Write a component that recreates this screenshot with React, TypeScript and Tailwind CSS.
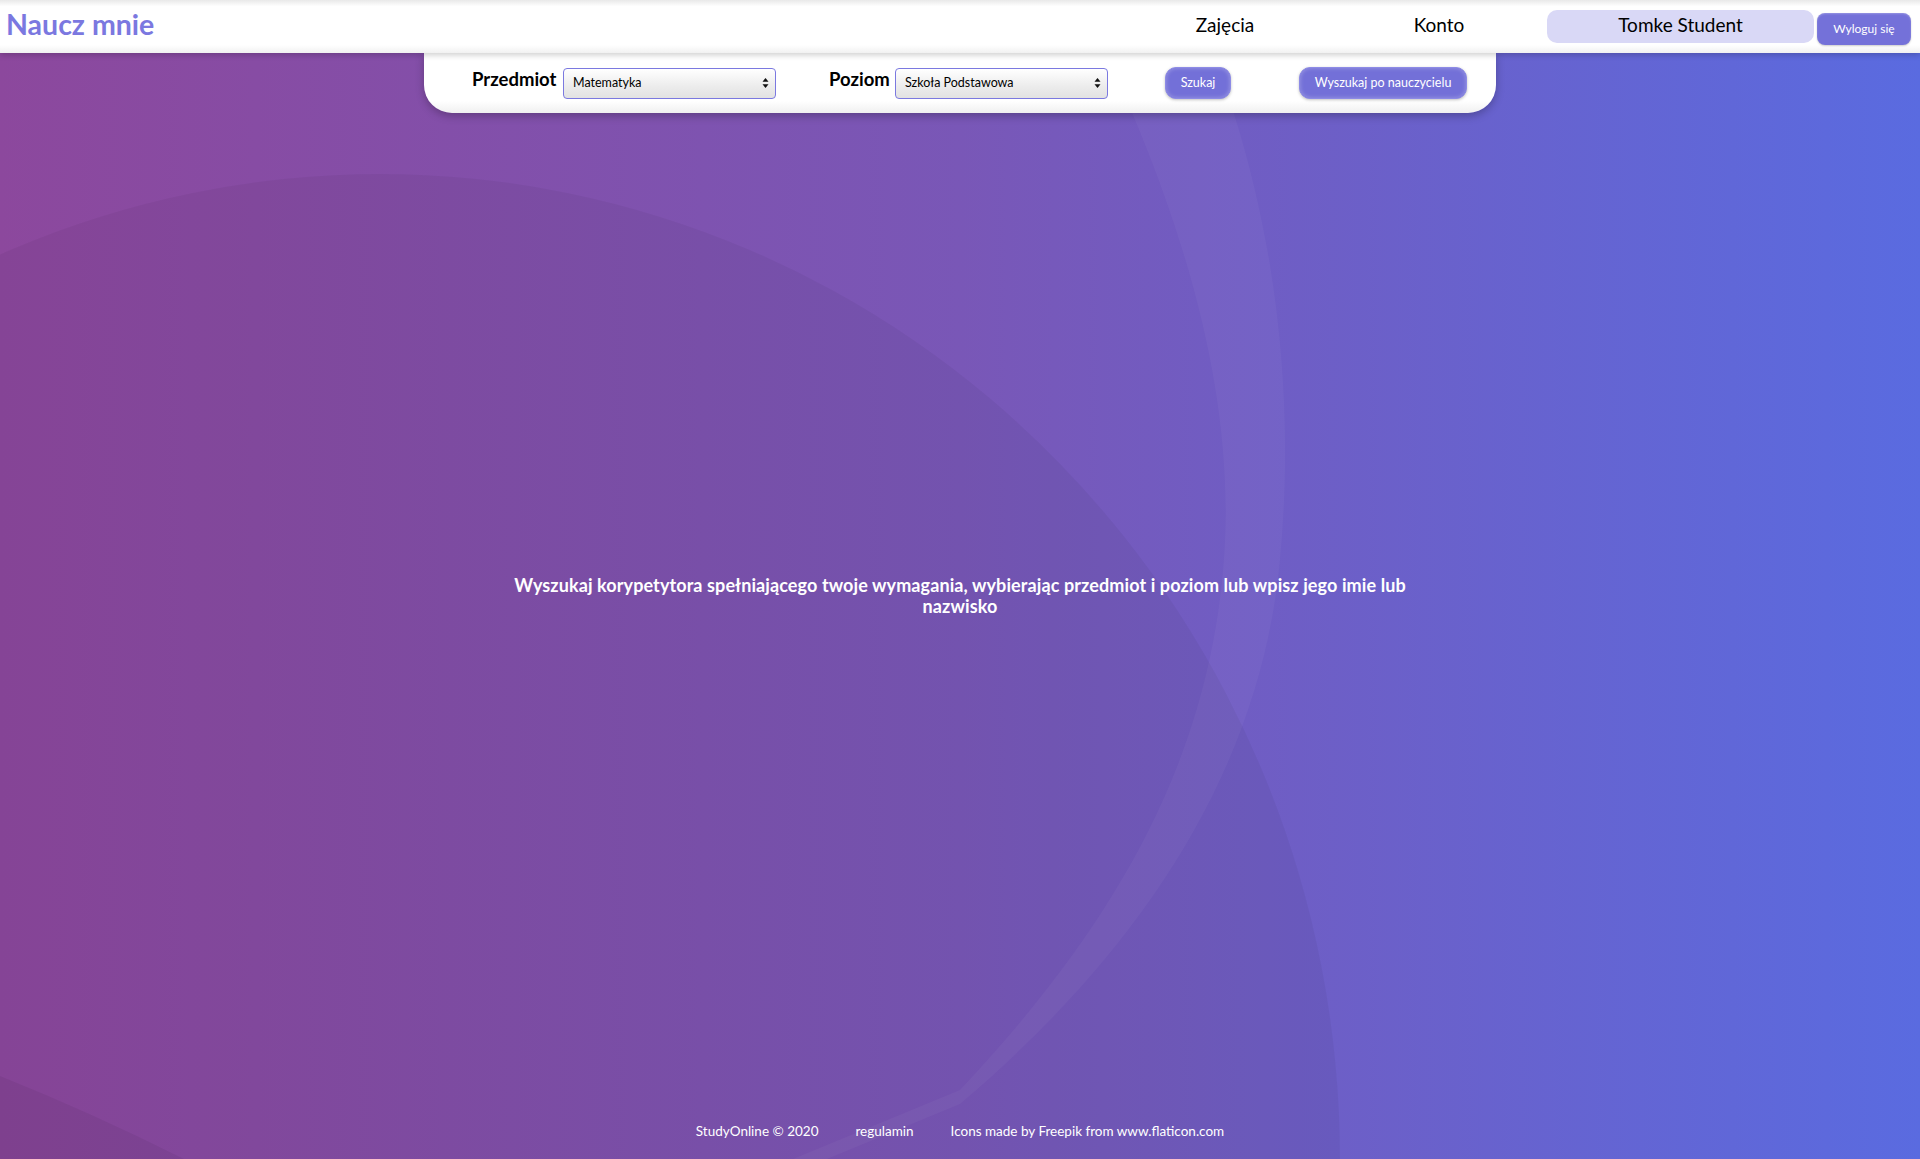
import React from "react";

function Select({ value, width }: { value: string; width: string }) {
  return (
    <div
      className={`relative ${width} h-[31px] rounded-[4px] border border-[#7b79e0] bg-[linear-gradient(#ffffff,#ececec_60%,#e2e2e2)] shadow-[inset_0_1px_0_#fff]`}
    >
      <span className="absolute left-[9px] top-1/2 -translate-y-1/2 text-[12.5px] text-black">{value}</span>
      <svg
        className="absolute right-[6px] top-1/2 -translate-y-1/2"
        width="7"
        height="11"
        viewBox="0 0 7 11"
      >
        <path d="M3.5 0.5 L6.5 4.3 L0.5 4.3 Z" fill="#111" />
        <path d="M3.5 10.5 L6.5 6.7 L0.5 6.7 Z" fill="#111" />
      </svg>
    </div>
  );
}

function Backdrop() {
  return (
    <svg
      className="absolute inset-0 h-full w-full"
      viewBox="0 0 1920 1159"
      preserveAspectRatio="none"
    >
      <ellipse cx="380" cy="1159" rx="960" ry="985" fill="#000" opacity="0.045" />
      <path
        d="M1190 0 C1260 150 1300 350 1280 560 C1260 780 1130 960 960 1104 L827 1159 L793 1159 L960 1090 C1110 930 1215 760 1225 540 C1232 380 1180 200 1080 0 Z"
        fill="#fff"
        opacity="0.035"
      />
      <path d="M0 1076 Q90 1112 184 1159 L0 1159 Z" fill="#000" opacity="0.05" />
    </svg>
  );
}

export default function App() {
  return (
    <div
      className="relative flex min-h-screen h-[1159px] flex-col overflow-hidden bg-[linear-gradient(to_right,#8c489d,#7957b7_50%,#5a6be0)]"
      style={{ fontFamily: "Lato, 'Open Sans', sans-serif" }}
    >
      <Backdrop />

      <header className="relative z-20 flex h-[53px] items-center bg-[linear-gradient(#e9e9e9,#ffffff_12%,#ffffff_85%,#f1f1f1)] shadow-[0_2px_6px_rgba(0,0,0,0.2)]">
        <a href="#" className="pb-[5px] pl-[6px] text-[28.5px] font-bold text-[#7b78e0]">
          Naucz mnie
        </a>
        <nav className="ml-auto flex items-center pr-[9px]">
          <a href="#" className="w-[214px] pb-[2px] text-center text-[19px] text-black">
            Zajęcia
          </a>
          <a href="#" className="w-[214px] pb-[2px] text-center text-[19px] text-black">
            Konto
          </a>
          <div className="ml-px flex h-[33px] w-[267px] items-center justify-center rounded-[10px] bg-[#d9d8f6] pb-[2px] text-[19px] text-black">
            Tomke Student
          </div>
          <button className="ml-[3px] mt-[4px] h-[32px] w-[94px] rounded-[8px] bg-[#7471d9] text-[12px] text-white shadow-[inset_0_1px_2px_rgba(255,255,255,0.25),0_1px_2px_rgba(0,0,0,0.2)]">
            Wyloguj się
          </button>
        </nav>
      </header>

      <div className="relative z-10 mx-auto flex h-[60px] w-[1072px] items-center rounded-b-[28px] bg-[linear-gradient(#ffffff,#ffffff_80%,#f0f0f0)] pl-[48px] shadow-[0_3px_8px_rgba(0,0,0,0.25)]">
        <span className="w-[84px] whitespace-nowrap pb-[6px] text-[18.5px] font-bold text-black">Przedmiot</span>
        <div className="ml-[7px]">
          <Select value="Matematyka" width="w-[213px]" />
        </div>
        <span className="ml-[53px] w-[59px] whitespace-nowrap pb-[6px] text-[18.5px] font-bold text-black">Poziom</span>
        <div className="ml-[7px]">
          <Select value="Szkoła Podstawowa" width="w-[213px]" />
        </div>
        <button className="ml-[57px] h-[32px] w-[66px] rounded-[11px] border border-[#8d8be6] bg-[#7370d8] text-[12.5px] text-white shadow-[inset_0_0_4px_rgba(255,255,255,0.3),0_1px_3px_rgba(0,0,0,0.25)]">
          Szukaj
        </button>
        <button className="ml-[68px] h-[32px] w-[168px] rounded-[11px] border border-[#8d8be6] bg-[#7370d8] text-[12.5px] text-white shadow-[inset_0_0_4px_rgba(255,255,255,0.3),0_1px_3px_rgba(0,0,0,0.25)]">
          Wyszukaj po nauczycielu
        </button>
      </div>

      <main className="relative z-10 flex flex-1 items-center justify-center pb-[24px]">
        <p className="whitespace-nowrap text-center text-[18px] font-bold leading-[21px] tracking-[0.1px] text-white">
          Wyszukaj korypetytora spełniającego twoje wymagania, wybierając przedmiot i poziom lub wpisz jego imie lub
          <br />
          nazwisko
        </p>
      </main>

      <footer className="relative z-10 flex h-[56px] items-center justify-center gap-[37px] text-[13.5px] text-white">
        <span>StudyOnline © 2020</span>
        <a href="#">regulamin</a>
        <span>Icons made by Freepik from www.flaticon.com</span>
      </footer>
    </div>
  );
}
